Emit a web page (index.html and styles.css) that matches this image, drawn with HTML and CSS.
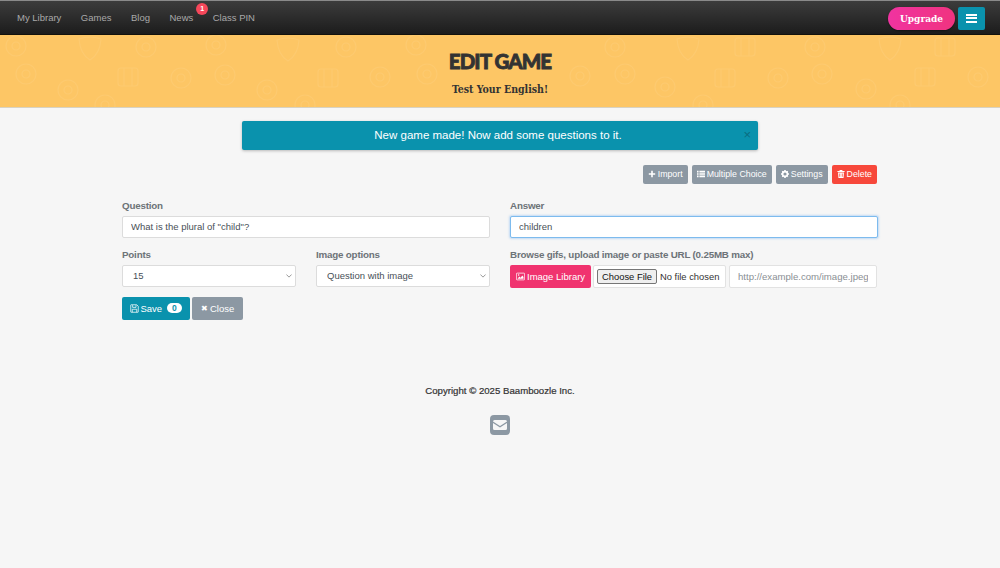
FILE: index.html
```html
<!DOCTYPE html>
<html lang="en">
<head>
<meta charset="utf-8">
<title>Edit Game</title>
<link rel="stylesheet" href="styles.css">
</head>
<body>
<nav class="navbar">
  <div class="nav-links">
    <a class="nav-link">My Library</a>
    <a class="nav-link">Games</a>
    <a class="nav-link">Blog</a>
    <a class="nav-link news">News<span class="nav-badge">1</span></a>
    <a class="nav-link">Class PIN</a>
  </div>
  <div class="nav-actions">
    <button class="upgrade">Upgrade</button>
    <button class="burger" aria-label="Menu"><span></span><span></span><span></span></button>
  </div>
</nav>
<header class="hero">
  <svg class="hero-pattern" width="1000" height="72" viewBox="0 0 1000 72" aria-hidden="true">
    <defs>
      <g id="p" fill="none" stroke="#fdca70" stroke-width="1.2">
        <circle r="10"/><circle r="4"/>
      </g>
      <g id="h" fill="none" stroke="#fdca70" stroke-width="1.2">
        <path d="M-11-9Q0-13 11-9Q10 6 0 12Q-10 6-11-9Z"/>
      </g>
      <g id="s" fill="none" stroke="#fdca70" stroke-width="1.2">
        <rect x="-10" y="-9" width="20" height="18" rx="3"/><path d="M-4-9V9M4-9V9"/>
      </g>
    </defs>
    <use href="#p" x="16" y="11"/><use href="#h" x="90" y="13"/><use href="#p" x="146" y="12"/><use href="#p" x="216" y="10"/><use href="#h" x="288" y="14"/><use href="#p" x="346" y="12"/><use href="#p" x="416" y="10"/>
    <use href="#p" x="26" y="39"/><use href="#p" x="68" y="55"/><use href="#s" x="128" y="42"/><use href="#p" x="181" y="43"/><use href="#p" x="225" y="40"/><use href="#p" x="267" y="55"/><use href="#s" x="328" y="43"/><use href="#p" x="380" y="42"/><use href="#p" x="427" y="39"/><use href="#p" x="105" y="70"/><use href="#p" x="305" y="70"/>
    <use href="#p" x="615" y="12"/><use href="#h" x="688" y="13"/><use href="#s" x="745" y="12"/><use href="#p" x="815" y="12"/><use href="#h" x="890" y="13"/><use href="#s" x="945" y="12"/>
    <use href="#p" x="580" y="41"/><use href="#p" x="625" y="39"/><use href="#p" x="665" y="52"/><use href="#s" x="725" y="43"/><use href="#p" x="778" y="43"/><use href="#p" x="822" y="39"/><use href="#p" x="866" y="54"/><use href="#s" x="925" y="42"/><use href="#p" x="978" y="42"/><use href="#p" x="703" y="70"/><use href="#p" x="900" y="70"/>
  </svg>
  <h1 class="hero-title">EDIT GAME</h1>
  <p class="hero-sub">Test Your English!</p>
</header>
<main class="page">
  <div class="alert">New game made! Now add some questions to it.<span class="alert-close">×</span></div>
  <div class="toolbar">
    <button class="btn btn-grey"><svg class="ico" viewBox="0 0 10 10"><path d="M4 1h2v3h3v2H6v3H4V6H1V4h3z" fill="currentColor"/></svg>Import</button>
    <button class="btn btn-grey"><svg class="ico" viewBox="0 0 10 10"><path d="M0 1h2v2H0zM3 1h7v2H3zM0 4h2v2H0zM3 4h7v2H3zM0 7h2v2H0zM3 7h7v2H3z" fill="currentColor"/></svg>Multiple Choice</button>
    <button class="btn btn-grey"><svg class="ico" viewBox="0 0 10 10"><circle cx="5" cy="5" r="3" fill="none" stroke="currentColor" stroke-width="2"/><path d="M4 0h2v2H4zM4 8h2v2H4zM0 4h2v2H0zM8 4h2v2H8zM1 2l1-1 1.500 1.500-1 1zM7.500 6.500l1-1L9 8 8 9zM1 8l1.500-1.500 1 1L2 9zM6.500 2.500 8 1l1 1-1.500 1.500z" fill="currentColor"/></svg>Settings</button>
    <button class="btn btn-red"><svg class="ico" viewBox="0 0 10 10"><path d="M3.500 0h3l.5 1.200H9.500V2.400H.5V1.200H3zM1.300 3h7.400l-.5 7H1.800zM3 4.500v4h1v-4zm3 0v4h1v-4z" fill="currentColor" fill-rule="evenodd"/></svg>Delete</button>
  </div>
  <form class="form-grid">
    <div class="col">
      <label class="field">
        <span class="label">Question</span>
        <input class="control" type="text" value="What is the plural of &quot;child&quot;?">
      </label>
      <div class="pair row-two">
        <label class="field">
          <span class="label">Points</span>
          <select class="control select"><option>15</option></select>
        </label>
        <label class="field">
          <span class="label">Image options</span>
          <select class="control select"><option>Question with image</option></select>
        </label>
      </div>
      <div class="actions">
        <button type="button" class="btn-lg btn-teal"><svg class="ico-lg" viewBox="0 0 12 12"><path d="M1.500 1h7.500l2 2v7.500a.5.5 0 0 1-.5.5h-9a.5.5 0 0 1-.5-.5v-9a.5.5 0 0 1 .5-.5zM3.500 1.500v3h4.500v-3M3 11V7h6v4" fill="none" stroke="currentColor"/></svg>Save<span class="count">0</span></button>
        <button type="button" class="btn-lg btn-slate"><span class="x">✖</span>Close</button>
      </div>
    </div>
    <div class="col">
      <label class="field">
        <span class="label">Answer</span>
        <input class="control focused" type="text" value="children">
      </label>
      <div class="field row-two">
        <span class="label">Browse gifs, upload image or paste URL (0.25MB max)</span>
        <div class="upload-row">
          <button type="button" class="btn-lg btn-pink"><svg class="ico-lg" viewBox="0 0 12 10"><rect x=".5" y=".5" width="11" height="9" rx="1" fill="none" stroke="currentColor"/><path d="M2 8l2.500-3 1.500 1.500L8.500 3.500 10 5.500V8z" fill="currentColor"/><circle cx="3.500" cy="3" r="1" fill="currentColor"/></svg>Image Library</button>
          <div class="file-box"><span class="file-btn">Choose File</span><span class="file-text">No file chosen</span></div>
          <input class="control url" type="text" placeholder="http://example.com/image.jpeg">
        </div>
      </div>
    </div>
  </form>
  <footer class="footer">
    <p class="copy">Copyright © 2025 Baamboozle Inc.</p>
    <a class="mail" aria-label="Email"><svg viewBox="0 0 20 20" width="20" height="20"><rect width="20" height="20" rx="4" fill="#8c98a3"/><path d="M3 6.500a1.500 1.500 0 0 1 1.500-1.500h11A1.500 1.500 0 0 1 17 6.500L10 11zM3 8l7 4.500L17 8v5.500a1.500 1.500 0 0 1-1.500 1.500h-11A1.500 1.500 0 0 1 3 13.500z" fill="#f6f6f6"/></svg></a>
  </footer>
</main>
</body>
</html>
```
FILE: styles.css
```css
* { box-sizing: border-box; }
html, body { margin: 0; height: 100%; }
body {
  background: #f6f6f6;
  font-family: "Liberation Sans", Arial, sans-serif;
  font-size: 10px;
  color: #495057;
  overflow: hidden;
}
.navbar {
  height: 35px;
  display: flex;
  justify-content: space-between;
  align-items: center;
  padding: 1px 15px 0 17px;
  background: linear-gradient(#3c3c3c, #1c1c1c);
  border-top: 1px solid #8a8a8a;
  border-bottom: 1px solid #14120c;
}
.nav-links { display: flex; gap: 19.500px; }
.nav-link { color: #a9a9a9; font-size: 9.500px; position: relative; line-height: 14px; }
.nav-badge {
  position: absolute;
  top: -8px;
  right: -15px;
  width: 12px;
  height: 12px;
  border-radius: 50%;
  background: #f6475a;
  color: #fff;
  font-size: 7px;
  font-weight: 700;
  line-height: 12px;
  text-align: center;
}
.nav-actions { display: flex; gap: 3px; align-items: center; }
.upgrade {
  width: 67px;
  height: 23px;
  border: 0;
  border-radius: 12px;
  background: linear-gradient(90deg, #f033a0, #f0337f);
  color: #fff;
  font-family: "DejaVu Serif Condensed", "DejaVu Serif", serif;
  font-weight: 700;
  font-size: 10px;
  padding: 0;
  box-shadow: 0 1px 2px rgba(0,0,0,.4);
}
.burger {
  width: 27px;
  height: 23px;
  border: 0;
  border-radius: 2px;
  background: #0a92ad;
  display: flex;
  flex-direction: column;
  justify-content: center;
  align-items: center;
  gap: 1.500px;
  padding: 0;
}
.burger span { width: 11px; height: 2px; background: #fff; }
.hero {
  position: relative;
  height: 73px;
  background: #fdc665;
  text-align: center;
  border-bottom: 1px solid #d8d2c2;
  overflow: hidden;
}
.hero-pattern { position: absolute; inset: 0; }
.hero-title {
  position: relative;
  margin: 0;
  padding-top: 13px;
  font-family: Lato, sans-serif;
  font-weight: 900;
  font-size: 20.500px;
  letter-spacing: -.9px;
  line-height: 26px;
  color: #333;
  -webkit-text-stroke: .8px #333;
}
.hero-sub {
  position: relative;
  margin: 8px 0 0;
  font-family: "DejaVu Serif Condensed", "DejaVu Serif", serif;
  font-weight: 700;
  font-size: 10.500px;
  line-height: 14px;
  color: #333;
}
.page { width: 756px; margin: 0 auto; padding-top: 13px; }
.alert {
  position: relative;
  width: 516px;
  height: 29px;
  margin: 0 auto;
  padding-right: 4px;
  background: #0a92ad;
  border-radius: 2px;
  color: #fff;
  font-size: 11.500px;
  line-height: 29px;
  text-align: center;
  box-shadow: 0 1px 3px rgba(0,0,0,.25);
}
.alert-close {
  position: absolute;
  right: 7px;
  top: -1px;
  color: #0b6c80;
  font-size: 13px;
}
.toolbar {
  display: flex;
  justify-content: flex-end;
  gap: 4px;
  margin-top: 15px;
  padding-right: 1px;
}
.btn {
  height: 18.500px;
  padding: 0 5px;
  border: 0;
  border-radius: 2px;
  color: #fff;
  font-family: inherit;
  font-size: 8.800px;
  display: inline-flex;
  align-items: center;
}
.btn-grey { background: #8c98a3; }
.btn-red { background: #f7483b; }
.ico { width: 8px; height: 8px; margin-right: 2px; }
.form-grid {
  display: grid;
  grid-template-columns: 368px 368px;
  column-gap: 20px;
  margin-top: 16px;
}
.col { display: flex; flex-direction: column; gap: 10px; min-width: 0; }
.field { display: block; min-width: 0; }
.row-two { margin-top: 1px; }
.label {
  display: block;
  font-size: 9.800px;
  letter-spacing: -.2px;
  font-weight: 700;
  line-height: 12px;
  margin-bottom: 4px;
  color: #6d7378;
}
.control {
  display: block;
  width: 100%;
  height: 22px;
  padding: 0 8px;
  border: 1px solid #dcdcdc;
  border-radius: 2px;
  background: #fff;
  font-family: inherit;
  font-size: 9.500px;
  color: #495057;
  outline: none;
}
.control::placeholder { color: #8a8f94; opacity: 1; }
.focused { border-color: #7dbbee; box-shadow: 0 0 2px 1px rgba(100,170,240,.35); }
.select {
  padding: 0 10px;
  appearance: none;
  background: #fff url("data:image/svg+xml,%3Csvg xmlns='http://www.w3.org/2000/svg' viewBox='0 0 8 5'%3E%3Cpath d='M.5.5 4 4 7.500.5' fill='none' stroke='%23777' stroke-width='1'/%3E%3C/svg%3E") no-repeat right 3px center / 6px 4px;
}
.pair { display: grid; grid-template-columns: 174px 174px; column-gap: 20px; }
.actions { display: flex; gap: 2.500px; margin-left: -.5px; }
.btn-lg {
  height: 23px;
  border: 0;
  border-radius: 2px;
  color: #fff;
  font-family: inherit;
  font-size: 9.500px;
  padding: 0 8px;
  display: inline-flex;
  align-items: center;
}
.btn-teal { background: #0a92ad; width: 68px; }
.btn-slate { background: #8c98a3; width: 51px; padding-left: 9px; }
.btn-pink { background: #f0336f; width: 81px; padding: 0 6px; flex: none; white-space: nowrap; }
.ico-lg { width: 9px; height: 9px; margin-right: 2px; flex: none; }
.count {
  margin-left: 5px;
  width: 15px;
  height: 10px;
  border-radius: 5px;
  background: #fff;
  color: #0a92ad;
  font-size: 8.500px;
  font-weight: 700;
  line-height: 10px;
  text-align: center;
}
.x { font-size: 8px; margin-right: 2px; }
.upload-row { display: flex; }
.file-box {
  width: 133px;
  height: 23px;
  flex: none;
  margin: 0 3px 0 2px;
  display: flex;
  align-items: center;
  gap: 3px;
  padding-left: 3px;
  border: 1px solid #e2e2e2;
  border-radius: 2px;
  background: #fff;
  font-size: 9.400px;
  color: #333;
}
.file-btn {
  width: 60px;
  height: 15px;
  text-align: center;
  line-height: 13px;
  background: #efefef;
  border: 1px solid #767676;
  border-radius: 2px;
  color: #111;
}
.url { width: 148px; height: 23px; flex: none; border-color: #e2e2e2; font-size: 9.600px; }
.footer { margin-top: 64px; text-align: center; }
.copy { margin: 0; font-size: 9.650px; line-height: 14px; font-weight: 400; color: #333; -webkit-text-stroke: .2px #333; }
.mail { display: block; width: 20px; height: 20px; margin: 17px auto 0; }
```
